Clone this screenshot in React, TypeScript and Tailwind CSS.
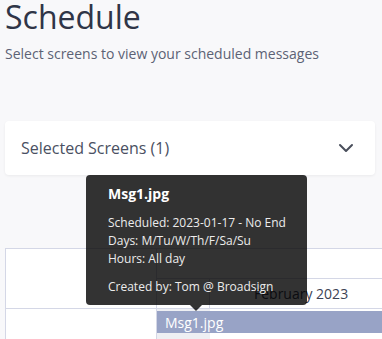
import { ChevronDown } from 'lucide-react';

export default function App() {
  return (
    <div className="relative h-[339px] w-[382px] overflow-hidden bg-[#f8f8fa] font-['Open_Sans',sans-serif]">
      <div className="pl-[5px]">
        <h1 className="text-[32px] leading-[34px] font-normal text-[#2f3547]">Schedule</h1>
        <p className="mt-[10px] text-[14px] leading-5 text-[#5c6275]">
          Select screens to view your scheduled messages
        </p>

        {/* selected screens card */}
        <div className="mt-[57px] mr-[7px] flex h-[54px] items-center justify-between rounded-[4px] bg-white pr-[17px] pl-4 shadow-[0_1px_3px_rgba(0,0,0,0.06)]">
          <span className="text-[16px] text-[#4a5062]">Selected Screens (1)</span>
          <ChevronDown className="h-6 w-6 text-[#4a4f5c]" strokeWidth={2} />
        </div>

        {/* timeline */}
        <div className="mt-[73px] flex border-t border-l border-[#d4d7e6] bg-white">
          <div className="w-[151px] shrink-0 border-r border-[#d4d7e6]">
            <div className="h-[60px] border-b border-[#d4d7e6]" />
            <div className="h-[40px]" />
          </div>
          <div className="flex-1">
            <div className="h-[30px] border-b border-[#d4d7e6]" />
            <div className="flex h-[30px] border-b border-[#d4d7e6]">
              <div className="w-[53px] shrink-0 border-r border-[#d4d7e6]" />
              <div className="flex flex-1 items-center pl-[44px] text-[14px] text-[#3c4254]">February 2023</div>
            </div>
            <div className="relative h-[40px]">
              <div className="h-full w-[53px] bg-[#eeeff3]" />
              <div className="absolute top-[2px] right-0 left-0 flex h-[22px] items-center bg-[#98a3c6] pl-2 text-[14px] text-white">
                Msg1.jpg
              </div>
            </div>
          </div>
        </div>
      </div>

      {/* tooltip */}
      <div className="absolute top-[175px] left-[86px] w-[221px] rounded-[4px] bg-black/80 px-[22px] pt-[7px] pb-[9px] whitespace-nowrap text-white">
        <div className="text-[14px] leading-6 font-bold">Msg1.jpg</div>
        <div className="mt-[8px] text-[12px] leading-[18px] text-[#ececec]">
          <div>Scheduled: 2023-01-17 - No End</div>
          <div>Days: M/Tu/W/Th/F/Sa/Su</div>
          <div>Hours: All day</div>
          <div className="mt-[10px]">Created by: Tom @ Broadsign</div>
        </div>
        <div className="absolute -bottom-[6px] left-[104px] h-0 w-0 border-t-[6px] border-r-[6px] border-l-[6px] border-t-black/80 border-r-transparent border-l-transparent" />
      </div>
    </div>
  );
}
